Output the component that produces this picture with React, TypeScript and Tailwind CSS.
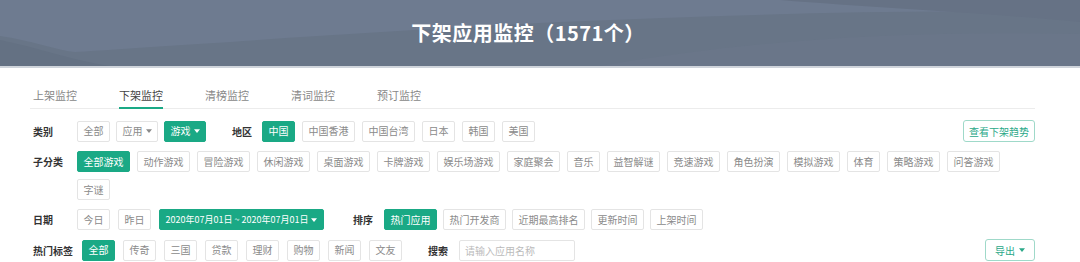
import { useState } from 'react';

const font = { fontFamily: '"Noto Sans CJK SC", "Noto Sans", sans-serif' };

const tabs = ['上架监控', '下架监控', '清榜监控', '清词监控', '预订监控'];
const regions = ['中国', '中国香港', '中国台湾', '日本', '韩国', '美国'];
const subCats = [
    '全部游戏', '动作游戏', '冒险游戏', '休闲游戏', '桌面游戏', '卡牌游戏', '娱乐场游戏', '家庭聚会', '音乐',
    '益智解谜', '竞速游戏', '角色扮演', '模拟游戏', '体育', '策略游戏', '问答游戏', '字谜',
];
const sorts = ['热门应用', '热门开发商', '近期最高排名', '更新时间', '上架时间'];
const hotTags = ['全部', '传奇', '三国', '贷款', '理财', '购物', '新闻', '文友'];

function Caret({ className = '' }: { className?: string }) {
    return (
        <svg viewBox="0 0 8 5" className={`w-[6px] h-[4px] ${className}`} fill="currentColor">
            <path d="M0 0h8L4 5z" />
        </svg>
    );
}

function Chip({ label, active, caret, small }: { label: string; active?: boolean; caret?: boolean; small?: boolean }) {
    return (
        <button
            className={`h-[21px] px-[5.5px] rounded-[2px] border leading-none flex items-center gap-[3px] whitespace-nowrap ${
                small ? 'text-[9px]' : 'text-[10px]'
            } ${active ? 'bg-[#1aa985] border-[#1aa985] text-white' : 'bg-white border-[#e4e4e4] text-[#8a8a8a]'}`}
        >
            {label}
            {caret && <Caret />}
        </button>
    );
}

function Label({ text, className = '' }: { text: string; className?: string }) {
    return <span className={`text-[10px] font-bold text-[#333] whitespace-nowrap ${className}`}>{text}</span>;
}

export default function App() {
    const [tab, setTab] = useState(1);

    return (
        <div className="w-[1080px] h-[262px] bg-white overflow-hidden" style={font}>
            {/* Header */}
            <div className="relative h-[68px] bg-[#6b788b] border-b-2 border-[#cfd4db] flex items-center justify-center pr-[24px] overflow-hidden">
                <svg className="absolute inset-0" width="1080" height="66" viewBox="0 0 1080 66" preserveAspectRatio="none">
                    <path d="M0 0H1080V66H0Z" fill="#6e7b90" />
                    <path d="M0 36C30 40 55 50 75 52C200 44 400 30 560 22C750 14 950 8 1080 14V66H0Z" fill="#687587" />
                    <path d="M0 40C40 48 70 60 110 66H0Z" fill="#647183" />
                    <path d="M780 0C880 8 1000 14 1080 22V0Z" fill="#667285" />
                    <path d="M600 66C750 40 900 30 1080 34V66Z" fill="#6a7689" />
                </svg>
                <h1 className="relative text-white text-[20px] font-bold tracking-[0.5px]">下架应用监控（1571个）</h1>
            </div>

            <div className="pl-[30px] pr-[45px]">
                {/* Tabs */}
                <div className="flex gap-[42px] pl-[3px] pt-[19px] border-b border-[#ececec]">
                    {tabs.map((t, i) => (
                        <button
                            key={t}
                            onClick={() => setTab(i)}
                            className={`text-[11px] leading-[16px] pb-[4px] border-b-2 -mb-px ${
                                tab === i ? 'border-[#1aa985] text-[#444]' : 'border-transparent text-[#888]'
                            }`}
                        >
                            {t}
                        </button>
                    ))}
                </div>

                <div className="pl-[3px] pt-[11px] flex flex-col gap-[9px]">
                    {/* 类别 / 地区 */}
                    <div className="flex items-center justify-between">
                        <div className="flex items-center">
                            <Label text="类别" className="w-[44px]" />
                            <div className="flex gap-[6px]">
                                <Chip label="全部" />
                                <Chip label="应用" caret />
                                <Chip label="游戏" active caret />
                            </div>
                            <Label text="地区" className="ml-[26px] mr-[10px]" />
                            <div className="flex gap-[7px]">
                                {regions.map((r, i) => (
                                    <Chip key={r} label={r} active={i === 0} />
                                ))}
                            </div>
                        </div>
                        <button className="h-[22px] px-[5px] rounded-[3px] border border-[#9fd9c9] text-[10px] text-[#2aa888]">
                            查看下架趋势
                        </button>
                    </div>

                    {/* 子分类 */}
                    <div className="flex items-start">
                        <Label text="子分类" className="w-[44px] leading-[21px]" />
                        <div className="flex flex-wrap gap-x-[7px] gap-y-[7px] w-[940px]">
                            {subCats.map((s, i) => (
                                <Chip key={s} label={s} active={i === 0} />
                            ))}
                        </div>
                    </div>

                    {/* 日期 / 排序 */}
                    <div className="flex items-center">
                        <Label text="日期" className="w-[44px]" />
                        <div className="flex gap-[8px]">
                            <Chip label="今日" />
                            <Chip label="昨日" />
                            <Chip label="2020年07月01日 ~ 2020年07月01日" active caret small />
                        </div>
                        <Label text="排序" className="ml-[29px] mr-[11px]" />
                        <div className="flex gap-[6px]">
                            {sorts.map((s, i) => (
                                <Chip key={s} label={s} active={i === 0} />
                            ))}
                        </div>
                    </div>

                    {/* 热门标签 / 搜索 */}
                    <div className="flex items-center justify-between">
                        <div className="flex items-center">
                            <Label text="热门标签" className="mr-[9px]" />
                            <div className="flex gap-[8px]">
                                {hotTags.map((t, i) => (
                                    <Chip key={t} label={t} active={i === 0} />
                                ))}
                            </div>
                            <Label text="搜索" className="ml-[26px] mr-[11px]" />
                            <input
                                placeholder="请输入应用名称"
                                className="w-[116px] h-[21px] px-[5px] rounded-[2px] border border-[#e4e4e4] text-[10px] placeholder:text-[#bbb] outline-none"
                            />
                        </div>
                        <button className="h-[22px] w-[50px] rounded-[3px] border border-[#9fd9c9] text-[10px] text-[#2aa888] flex items-center justify-center gap-[4px]">
                            导出
                            <Caret />
                        </button>
                    </div>
                </div>
            </div>
        </div>
    );
}
